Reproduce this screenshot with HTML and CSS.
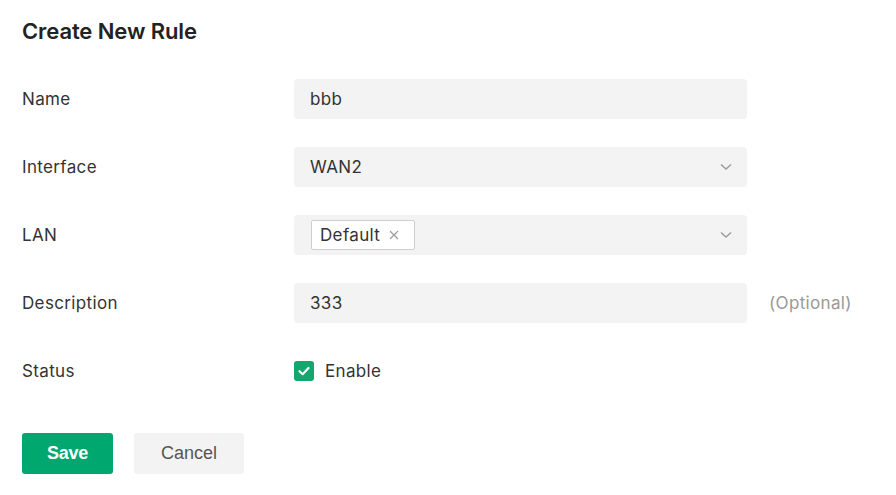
FILE: index.html
```html
<!DOCTYPE html>
<html lang="en">
<head>
<meta charset="utf-8">
<title>Create New Rule</title>
<link rel="stylesheet" href="styles.css">
</head>
<body>
<div class="page">
  <h1 class="title">Create New Rule</h1>
  <form class="form">
    <div class="row">
      <label class="label">Name</label>
      <div class="field"><span class="value">bbb</span></div>
    </div>
    <div class="row">
      <label class="label">Interface</label>
      <div class="field select">
        <span class="value">WAN2</span>
        <svg class="chev" width="12" height="8" viewBox="0 0 12 8"><path d="M1 1.5 L6 6 L11 1.5" fill="none" stroke="#9a9a9a" stroke-width="1.4"/></svg>
      </div>
    </div>
    <div class="row">
      <label class="label">LAN</label>
      <div class="field select tags">
        <span class="tag">Default<svg class="tag-x" width="10" height="10" viewBox="0 0 10 10"><path d="M1 1 L9 9 M9 1 L1 9" stroke="#9a9a9a" stroke-width="1.1"/></svg></span>
        <svg class="chev" width="12" height="8" viewBox="0 0 12 8"><path d="M1 1.5 L6 6 L11 1.5" fill="none" stroke="#9a9a9a" stroke-width="1.4"/></svg>
      </div>
    </div>
    <div class="row">
      <label class="label">Description</label>
      <div class="field"><span class="value">333</span></div>
      <span class="hint">(Optional)</span>
    </div>
    <div class="row">
      <label class="label">Status</label>
      <div class="check">
        <span class="box"><svg width="20" height="20" viewBox="0 0 20 20"><path d="M5.5 10.2 L8.6 13.2 L14.5 7" fill="none" stroke="#fff" stroke-width="2.2" stroke-linecap="round" stroke-linejoin="round"/></svg></span>
        <span class="check-text">Enable</span>
      </div>
    </div>
    <div class="actions">
      <button type="button" class="btn btn-primary">Save</button>
      <button type="button" class="btn btn-default">Cancel</button>
    </div>
  </form>
</div>
</body>
</html>
```
FILE: styles.css
```css
* { box-sizing: border-box; }
html, body { margin: 0; padding: 0; background: #fff; }
body { font-family: Inter, "Noto Sans", "Liberation Sans", sans-serif; color: #333; }
.page { padding: 16px 22px 0 22px; }
.title {
  margin: 0 0 33px 0;
  font-size: 22px;
  line-height: 30px;
  font-weight: 600;
  color: #222;
  letter-spacing: -0.1px;
}
.form { display: flex; flex-direction: column; gap: 28px; }
.row { display: flex; align-items: center; height: 40px; }
.txt, .label, .field, .tag, .hint, .check-text { font-size: 17px; letter-spacing: 0.35px; }
.label { width: 272px; color: #333; }
.field {
  width: 453px;
  height: 40px;
  background: #f3f3f3;
  border-radius: 4px;
  display: flex;
  align-items: center;
  padding: 0 16px;
  color: #333;
}
.select { justify-content: space-between; }
.tags { padding-left: 17px; }
.chev { margin-right: -1px; }
.tag {
  display: inline-flex;
  align-items: center;
  height: 30px;
  width: 104px;
  padding: 0 8px;
  background: #fff;
  border: 1px solid #cfcfcf;
  border-radius: 2px;
  color: #333;
}
.tag-x { margin-left: 9px; }
.hint { margin-left: 22px; color: #999; }
.check { display: flex; align-items: center; gap: 11px; }
.box {
  width: 20px; height: 20px;
  background: #14a66c;
  border-radius: 3px;
  display: inline-flex;
}
.check-text { color: #333; }
.actions { display: flex; gap: 21px; margin-top: 14px; }
.btn {
  height: 41px;
  border: none;
  border-radius: 3px;
  font-family: "Liberation Sans", Arial, sans-serif;
  font-size: 18px;
  padding: 0;
  cursor: pointer;
}
.btn-primary { width: 91px; background: #00a870; color: #fff; font-weight: 700; letter-spacing: -0.3px; }
.btn-default { width: 110px; background: #f3f3f3; color: #555; }
```
